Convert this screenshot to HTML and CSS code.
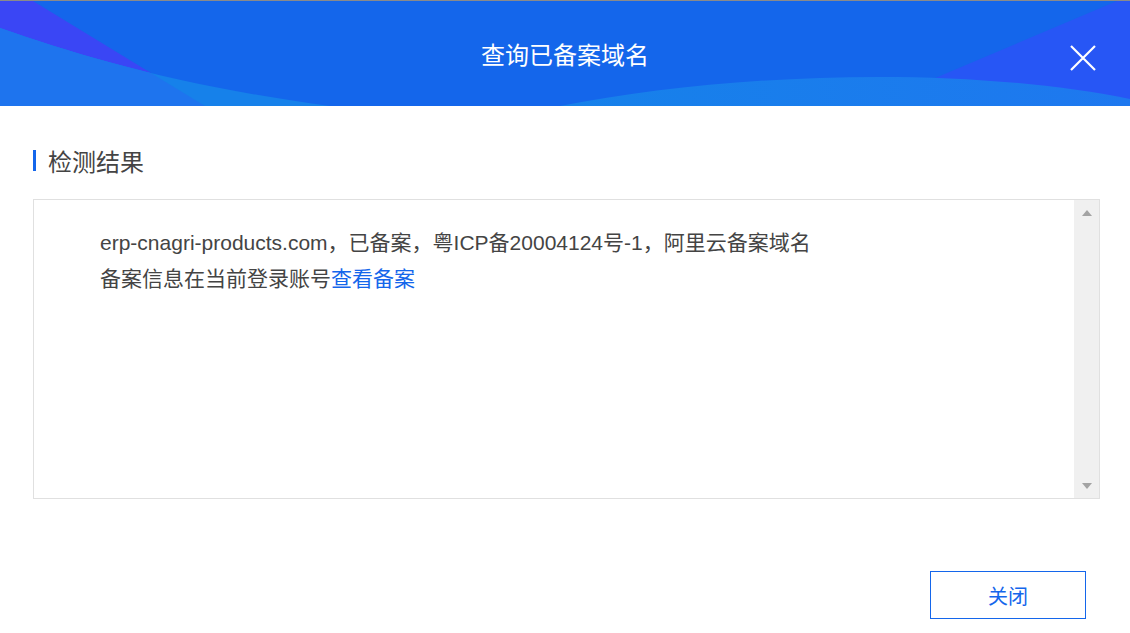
FILE: index.html
```html
<!DOCTYPE html>
<html lang="zh-CN">
<head>
    <meta charset="UTF-8">
    <meta name="viewport" content="width=device-width, initial-scale=1.0">
    <title>查询已备案域名</title>
    <link rel="stylesheet" href="styles.css">
</head>
<body>
    <div class="dialog">
        <div class="dialog-header">
            <svg class="header-bg" viewBox="0 0 1130 105" preserveAspectRatio="none">
                <defs>
                    <clipPath id="leftWave">
                        <path d="M0 27 C 80 55, 180 85, 330 105 L0 105 Z"/>
                    </clipPath>
                    <linearGradient id="rightWaveFill" x1="0" x2="1" y1="0" y2="0">
                        <stop offset="0" stop-color="#1681EA"/>
                        <stop offset="1" stop-color="#1E78EF"/>
                    </linearGradient>
                </defs>
                <rect width="1130" height="105" fill="#1466EB"/>
                <path d="M0 0 L33 0 L205 105 L0 105 Z" fill="#3A46F5"/>
                <path d="M0 27 C 80 55, 180 85, 330 105 L0 105 Z" fill="#1681EA"/>
                <path d="M0 0 L33 0 L205 105 L0 105 Z" fill="#1E74EE" clip-path="url(#leftWave)"/>
                <path d="M1117 0 L1130 0 L1130 105 L869 105 Z" fill="#2756F5"/>
                <path d="M560 105 C 720 74, 950 62, 1130 98 L1130 105 Z" fill="url(#rightWaveFill)"/>
            </svg>
            <h1 class="dialog-title">查询已备案域名</h1>
            <button class="close-x" onclick="closeDialog()">
                <svg width="26" height="26" viewBox="0 0 26 26">
                    <path d="M1 1 L25 25 M25 1 L1 25" stroke="#fff" stroke-width="2.2" fill="none"/>
                </svg>
            </button>
        </div>

        <div class="dialog-body">
            <h2 class="section-title">检测结果</h2>
            <div class="result-box">
                <div class="result-text">
                    <p>erp-cnagri-products.com，已备案，粤ICP备20004124号-1，阿里云备案域名</p>
                    <p>备案信息在当前登录账号<a href="#">查看备案</a></p>
                </div>
                <div class="scrollbar">
                    <span class="arrow up"></span>
                    <span class="arrow down"></span>
                </div>
            </div>
        </div>

        <div class="dialog-footer">
            <button class="btn-close" onclick="closeDialog()">关闭</button>
        </div>
    </div>

    <script>
        function closeDialog() {
            document.querySelector(".dialog").style.visibility = "hidden";
        }
    </script>
</body>
</html>
```
FILE: styles.css
```css
body {
    margin: 0;
    background: #fff;
    font-family: "Liberation Sans", Arial, "Noto Sans CJK SC", sans-serif;
}
.dialog {
    width: 1130px;
    height: 633px;
    border-top: 1px solid #8a8a8a;
    box-sizing: border-box;
}
.dialog-header {
    position: relative;
    height: 105px;
    display: flex;
    align-items: center;
    justify-content: center;
    overflow: hidden;
}
.header-bg {
    position: absolute;
    left: 0;
    top: 0;
    width: 100%;
    height: 100%;
}
.dialog-title {
    position: relative;
    margin: 0;
    color: #fff;
    font-size: 24px;
    font-weight: normal;
    font-family: "Noto Sans CJK SC", sans-serif;
}
.close-x {
    position: absolute;
    right: 34px;
    top: 44px;
    width: 26px;
    height: 26px;
    padding: 0;
    border: none;
    background: none;
    cursor: pointer;
}
.close-x svg {
    display: block;
}
.dialog-body {
    padding: 44px 30px 0 33px;
}
.section-title {
    margin: 0 0 28px;
    padding-left: 12px;
    border-left: 3px solid #1466EB;
    height: 21px;
    line-height: 21px;
    font-size: 24px;
    font-weight: normal;
    color: #444;
    font-family: "Noto Sans CJK SC", sans-serif;
}
.result-box {
    display: flex;
    height: 298px;
    border: 1px solid #e0e0e0;
}
.result-text {
    flex: 1;
    padding: 25px 0 0 66px;
    font-size: 21px;
    line-height: 36px;
    color: #444;
}
.result-text p {
    margin: 0;
}
.result-text a {
    color: #1466EB;
    text-decoration: none;
}
.scrollbar {
    width: 25px;
    background: #f0f0f0;
    display: flex;
    flex-direction: column;
    justify-content: space-between;
    align-items: center;
    padding: 10px 0 9px;
}
.arrow {
    width: 0;
    height: 0;
    border-left: 5.5px solid transparent;
    border-right: 5.5px solid transparent;
}
.arrow.up {
    border-bottom: 6px solid #a3a3a3;
}
.arrow.down {
    border-top: 6px solid #a3a3a3;
}
.dialog-footer {
    display: flex;
    justify-content: flex-end;
    padding: 72px 44px 0 0;
}
.btn-close {
    width: 156px;
    height: 48px;
    border: 1px solid #1466EB;
    background: #fff;
    color: #1466EB;
    font-size: 20px;
    font-family: "Noto Sans CJK SC", sans-serif;
    cursor: pointer;
}
```
